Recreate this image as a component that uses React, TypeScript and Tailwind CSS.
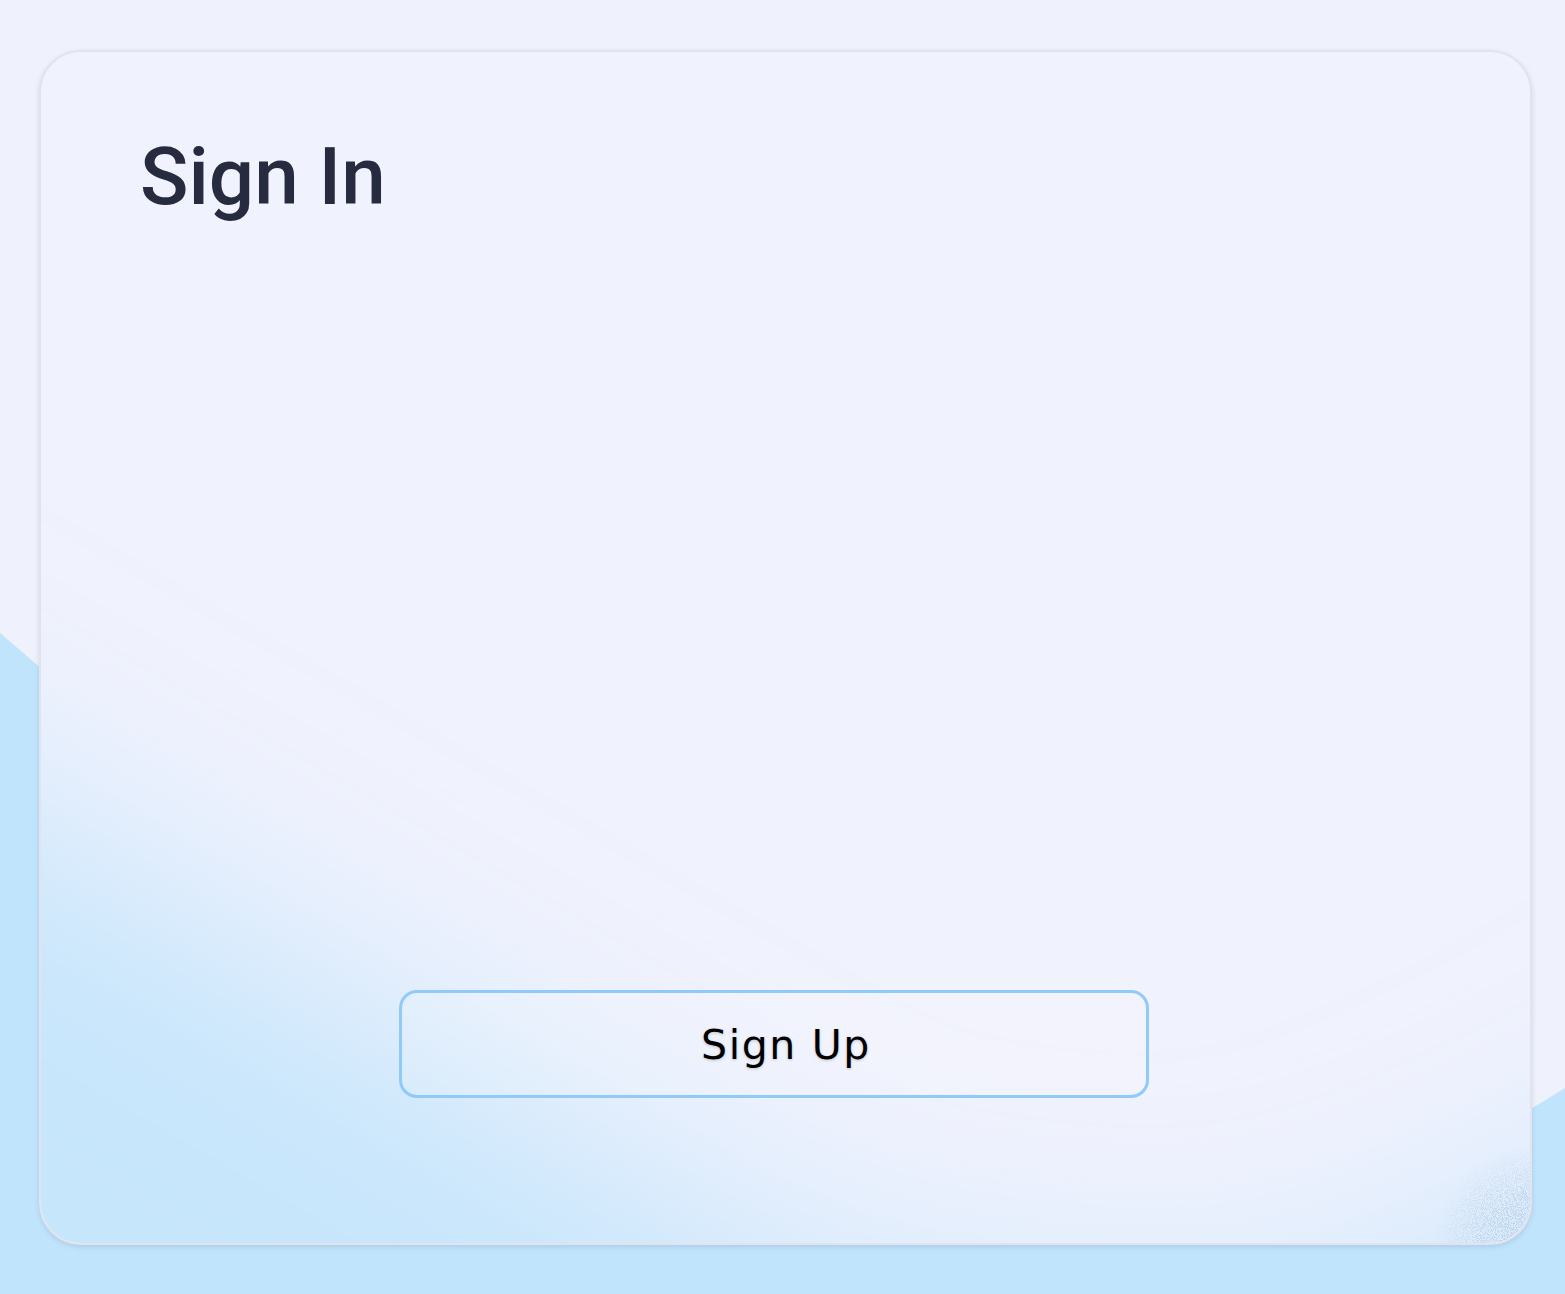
import React from "react";

const INNER =
  "M-400,570 L0,800 L850,1290 L1250,1330 L1565,1200 L1900,1000 L1900,1800 L-400,1800 Z";

export default function App() {
  return (
    <div className="relative w-full min-h-[1294px] overflow-hidden bg-[#eff1fc]">
      <svg
        className="absolute inset-0 h-[1294px] w-[1565px]"
        width="1565"
        height="1294"
        viewBox="0 0 1565 1294"
      >
        <path d="M0,633 C500,1063 960,1470 1565,1088 L1565,1294 L0,1294 Z" fill="#c0e4fc" />
      </svg>

      <div className="relative pt-[50px] pl-[39px]">
        <div className="relative flex h-[1195px] w-[1493px] flex-col overflow-hidden rounded-[42px] border-2 border-[#e2e3ec] bg-[#f0f2fd] shadow-[0_2px_5px_rgba(60,80,120,0.16)]">
          <svg
            className="pointer-events-none absolute left-[-41px] top-[-52px]"
            width="1565"
            height="1294"
            viewBox="0 0 1565 1294"
          >
            <defs>
              <filter
                id="soft"
                filterUnits="userSpaceOnUse"
                x="-600"
                y="-600"
                width="2800"
                height="2600"
              >
                <feGaussianBlur stdDeviation="110" />
              </filter>
            </defs>
            <path d={INNER} fill="#c2e4fc" fillOpacity="0.9" filter="url(#soft)" />
          </svg>

          <h1
            className="relative pl-[99px] pt-[85px] text-[80px] leading-[80px] font-medium text-[#272b3f]"
            style={{ fontFamily: "Roboto, 'Liberation Sans', sans-serif" }}
          >
            Sign In
          </h1>
          <div className="flex-1" />
          <button className="relative mb-[145px] ml-[358px] flex h-[108px] w-[750px] items-center justify-center rounded-[18px] border-[3px] border-[#90caf9] bg-white/10 pl-[24px] pt-[4px]">
            <span
              className="text-[41px] tracking-[0.04em] text-black [text-shadow:0_1px_3px_rgba(0,0,0,0.2)]"
              style={{ fontFamily: "'DejaVu Sans', 'Open Sans', sans-serif" }}
            >
              Sign Up
            </span>
          </button>

          <svg
            className="pointer-events-none absolute bottom-0 right-0"
            width="100"
            height="100"
            viewBox="0 0 100 100"
          >
            <defs>
              <filter id="noise" x="0" y="0" width="100%" height="100%">
                <feTurbulence type="fractalNoise" baseFrequency="1.1" numOctaves="2" seed="5" result="n" />
                <feColorMatrix
                  in="n"
                  type="matrix"
                  values="0 0 0 0 0.5  0 0 0 0 0.64  0 0 0 0 0.8  7 0 0 0 -3.2"
                />
              </filter>
              <radialGradient id="fade" cx="100" cy="100" r="95" gradientUnits="userSpaceOnUse">
                <stop offset="0" stopColor="white" stopOpacity="1" />
                <stop offset="0.5" stopColor="white" stopOpacity="0.8" />
                <stop offset="1" stopColor="white" stopOpacity="0" />
              </radialGradient>
              <mask id="m">
                <rect width="100" height="100" fill="url(#fade)" />
              </mask>
            </defs>
            <rect width="100" height="100" filter="url(#noise)" mask="url(#m)" />
          </svg>
        </div>
      </div>
    </div>
  );
}
